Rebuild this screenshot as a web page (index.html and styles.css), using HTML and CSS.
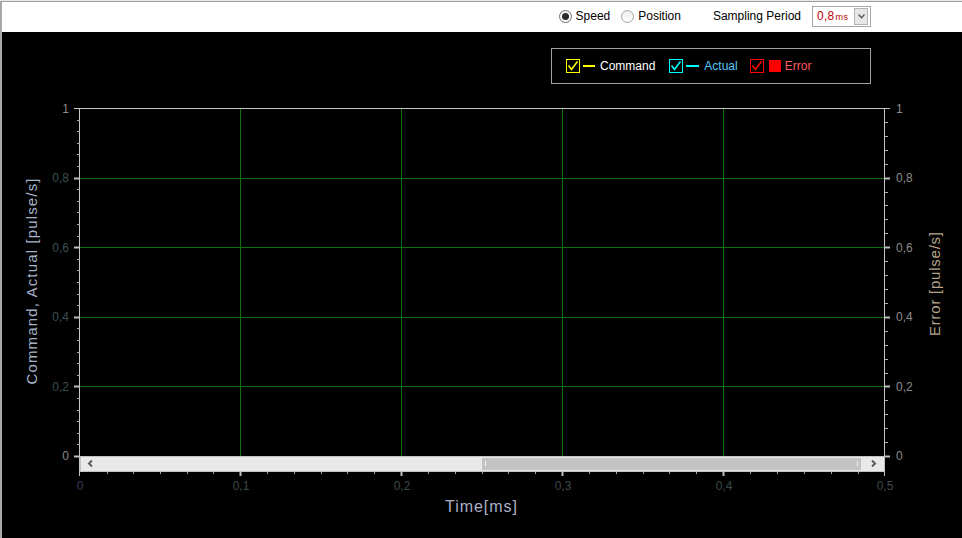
FILE: index.html
```html
<!DOCTYPE html>
<html>
<head>
<meta charset="utf-8">
<title>Chart</title>
<link rel="stylesheet" href="styles.css">
</head>
<body>
<div class="window">
  <div class="toolbar">
    <label class="opt"><span class="radio checked"><span class="dot"></span></span>Speed</label>
    <label class="opt opt-pos"><span class="radio"></span>Position</label>
    <span class="period-label">Sampling Period</span>
    <div class="select">
      <span class="value">0,8<span class="unit">ms</span></span>
      <span class="drop"><svg width="7" height="5" viewBox="0 0 7 5"><polyline class="chev" points="0.5,0.5 3.5,3.8 6.5,0.5"/></svg></span>
    </div>
  </div>
  <div class="chart">
    <div class="legend-row">
      <div class="legend">
        <span class="cb cb-yellow"><svg width="12" height="12" viewBox="0 0 12 12"><polyline points="1.5,5.5 4.5,9.5 10.5,1.5"/></svg></span>
        <span class="swatch-line sw-yellow"></span>
        <span class="lbl lbl-cmd">Command</span>
        <span class="cb cb-cyan cb-gap1"><svg width="12" height="12" viewBox="0 0 12 12"><polyline points="1.5,5.5 4.5,9.5 10.5,1.5"/></svg></span>
        <span class="swatch-line sw-cyan"></span>
        <span class="lbl lbl-act">Actual</span>
        <span class="cb cb-red cb-gap2"><svg width="12" height="12" viewBox="0 0 12 12"><polyline points="1.5,5.5 4.5,9.5 10.5,1.5"/></svg></span>
        <span class="swatch-sq"></span>
        <span class="lbl lbl-err">Error</span>
      </div>
    </div>
    <svg class="plot" width="960" height="454" viewBox="2 84 960 454">
      <g class="grid">
        <line x1="80" y1="178.5" x2="885" y2="178.5"/>
        <line x1="80" y1="247.5" x2="885" y2="247.5"/>
        <line x1="80" y1="317.5" x2="885" y2="317.5"/>
        <line x1="80" y1="386.5" x2="885" y2="386.5"/>
        <line x1="240.5" y1="109" x2="240.5" y2="456"/>
        <line x1="401.5" y1="109" x2="401.5" y2="456"/>
        <line x1="562.5" y1="109" x2="562.5" y2="456"/>
        <line x1="723.5" y1="109" x2="723.5" y2="456"/>
      </g>
      <g class="axis">
        <line x1="74" y1="108.5" x2="890" y2="108.5"/>
        <line x1="79.5" y1="108" x2="79.5" y2="476"/>
        <line x1="884.5" y1="108" x2="884.5" y2="476"/>
      </g>
      <g class="major">
        <line x1="74" y1="178.5" x2="80" y2="178.5"/>
        <line x1="74" y1="247.5" x2="80" y2="247.5"/>
        <line x1="74" y1="317.5" x2="80" y2="317.5"/>
        <line x1="74" y1="386.5" x2="80" y2="386.5"/>
        <line x1="74" y1="456.5" x2="80" y2="456.5"/>
        <line x1="885" y1="178.5" x2="890" y2="178.5"/>
        <line x1="885" y1="247.5" x2="890" y2="247.5"/>
        <line x1="885" y1="317.5" x2="890" y2="317.5"/>
        <line x1="885" y1="386.5" x2="890" y2="386.5"/>
        <line x1="885" y1="456.5" x2="890" y2="456.5"/>
        <line x1="240.5" y1="472" x2="240.5" y2="476"/>
        <line x1="401.5" y1="472" x2="401.5" y2="476"/>
        <line x1="562.5" y1="472" x2="562.5" y2="476"/>
        <line x1="723.5" y1="472" x2="723.5" y2="476"/>
      </g>
      <g class="minor">
        <line x1="77" y1="120.5" x2="80" y2="120.5"/><line x1="77" y1="131.5" x2="80" y2="131.5"/><line x1="77" y1="143.5" x2="80" y2="143.5"/><line x1="77" y1="154.5" x2="80" y2="154.5"/><line x1="77" y1="166.5" x2="80" y2="166.5"/>
        <line x1="77" y1="189.5" x2="80" y2="189.5"/><line x1="77" y1="201.5" x2="80" y2="201.5"/><line x1="77" y1="212.5" x2="80" y2="212.5"/><line x1="77" y1="224.5" x2="80" y2="224.5"/><line x1="77" y1="236.5" x2="80" y2="236.5"/>
        <line x1="77" y1="259.5" x2="80" y2="259.5"/><line x1="77" y1="270.5" x2="80" y2="270.5"/><line x1="77" y1="282.5" x2="80" y2="282.5"/><line x1="77" y1="294.5" x2="80" y2="294.5"/><line x1="77" y1="305.5" x2="80" y2="305.5"/>
        <line x1="77" y1="328.5" x2="80" y2="328.5"/><line x1="77" y1="340.5" x2="80" y2="340.5"/><line x1="77" y1="352.5" x2="80" y2="352.5"/><line x1="77" y1="363.5" x2="80" y2="363.5"/><line x1="77" y1="375.5" x2="80" y2="375.5"/>
        <line x1="77" y1="398.5" x2="80" y2="398.5"/><line x1="77" y1="410.5" x2="80" y2="410.5"/><line x1="77" y1="421.5" x2="80" y2="421.5"/><line x1="77" y1="433.5" x2="80" y2="433.5"/><line x1="77" y1="444.5" x2="80" y2="444.5"/>
        <line x1="885" y1="122.5" x2="888" y2="122.5"/><line x1="885" y1="136.5" x2="888" y2="136.5"/><line x1="885" y1="150.5" x2="888" y2="150.5"/><line x1="885" y1="164.5" x2="888" y2="164.5"/>
        <line x1="885" y1="192.5" x2="888" y2="192.5"/><line x1="885" y1="205.5" x2="888" y2="205.5"/><line x1="885" y1="219.5" x2="888" y2="219.5"/><line x1="885" y1="233.5" x2="888" y2="233.5"/>
        <line x1="885" y1="261.5" x2="888" y2="261.5"/><line x1="885" y1="275.5" x2="888" y2="275.5"/><line x1="885" y1="289.5" x2="888" y2="289.5"/><line x1="885" y1="303.5" x2="888" y2="303.5"/>
        <line x1="885" y1="331.5" x2="888" y2="331.5"/><line x1="885" y1="345.5" x2="888" y2="345.5"/><line x1="885" y1="359.5" x2="888" y2="359.5"/><line x1="885" y1="373.5" x2="888" y2="373.5"/>
        <line x1="885" y1="400.5" x2="888" y2="400.5"/><line x1="885" y1="414.5" x2="888" y2="414.5"/><line x1="885" y1="428.5" x2="888" y2="428.5"/><line x1="885" y1="442.5" x2="888" y2="442.5"/>
        <line x1="107.5" y1="472" x2="107.5" y2="474"/><line x1="133.5" y1="472" x2="133.5" y2="474"/><line x1="160.5" y1="472" x2="160.5" y2="474"/><line x1="187.5" y1="472" x2="187.5" y2="474"/><line x1="213.5" y1="472" x2="213.5" y2="474"/>
        <line x1="267.5" y1="472" x2="267.5" y2="474"/><line x1="294.5" y1="472" x2="294.5" y2="474"/><line x1="321.5" y1="472" x2="321.5" y2="474"/><line x1="347.5" y1="472" x2="347.5" y2="474"/><line x1="374.5" y1="472" x2="374.5" y2="474"/>
        <line x1="428.5" y1="472" x2="428.5" y2="474"/><line x1="455.5" y1="472" x2="455.5" y2="474"/><line x1="482.5" y1="472" x2="482.5" y2="474"/><line x1="508.5" y1="472" x2="508.5" y2="474"/><line x1="535.5" y1="472" x2="535.5" y2="474"/>
        <line x1="589.5" y1="472" x2="589.5" y2="474"/><line x1="616.5" y1="472" x2="616.5" y2="474"/><line x1="643.5" y1="472" x2="643.5" y2="474"/><line x1="669.5" y1="472" x2="669.5" y2="474"/><line x1="696.5" y1="472" x2="696.5" y2="474"/>
        <line x1="750.5" y1="472" x2="750.5" y2="474"/><line x1="777.5" y1="472" x2="777.5" y2="474"/><line x1="804.5" y1="472" x2="804.5" y2="474"/><line x1="831.5" y1="472" x2="831.5" y2="474"/><line x1="858.5" y1="472" x2="858.5" y2="474"/>
      </g>
      <g class="scroll">
        <rect class="track" x="80.5" y="456.5" width="804" height="15"/>
        <rect class="thumb" x="482" y="458" width="379" height="12"/>
        <line class="grip" x1="485.5" y1="461" x2="485.5" y2="466"/>
        <line class="grip" x1="857.5" y1="461" x2="857.5" y2="466"/>
        <polyline class="arrow" points="92,460.5 89,463.5 92,466.5"/>
        <polyline class="arrow" points="872,460.5 875,463.5 872,466.5"/>
      </g>
      <g class="lbl-left">
        <text class="lt-light" x="69" y="112.5">1</text>
        <text x="69" y="182">0,8</text>
        <text x="69" y="251.5">0,6</text>
        <text x="69" y="321">0,4</text>
        <text x="69" y="390.5">0,2</text>
        <text class="lt-light" x="69" y="460">0</text>
      </g>
      <g class="lbl-right">
        <text x="896" y="112.5">1</text>
        <text x="896" y="182">0,8</text>
        <text x="896" y="251.5">0,6</text>
        <text x="896" y="321">0,4</text>
        <text x="896" y="390.5">0,2</text>
        <text x="896" y="460">0</text>
      </g>
      <g class="lbl-bottom">
        <text class="zero" x="80" y="490">0</text>
        <text x="241" y="490">0,1</text>
        <text x="402" y="490">0,2</text>
        <text x="563" y="490">0,3</text>
        <text x="724" y="490">0,4</text>
        <text x="885" y="490">0,5</text>
      </g>
      <text class="title-left" transform="translate(37,281.5) rotate(-90)" textLength="206">Command, Actual [pulse/s]</text>
      <text class="title-right" transform="translate(940,284) rotate(-90)" textLength="104">Error [pulse/s]</text>
      <text class="title-bottom" x="481" y="512" textLength="72">Time[ms]</text>
    </svg>
  </div>
</div>
</body>
</html>
```
FILE: styles.css
```css
* { box-sizing: border-box; }
html, body { margin: 0; padding: 0; }
body {
  background: #e8e8e8;
  font-family: "Liberation Sans", Arial, sans-serif;
  overflow: hidden;
}
.window {
  margin-top: 1px;
  width: 962px;
  height: 537px;
  border-top: 1px solid #a0a0a0;
  border-left: 2px solid #a8a8a8;
  background: #ffffff;
  display: flex;
  flex-direction: column;
}
.toolbar {
  height: 30px;
  flex: none;
  display: flex;
  align-items: center;
  justify-content: flex-end;
  padding-right: 91px;
  padding-bottom: 2px;
  font-size: 12px;
  color: #000;
}
.opt {
  display: flex;
  align-items: center;
}
.opt-pos { margin-left: 11px; }
.radio {
  width: 13px;
  height: 13px;
  border-radius: 50%;
  border: 1px solid #a4a4a4;
  background: linear-gradient(#eeeeee, #ffffff);
  margin-right: 4px;
  display: flex;
  align-items: center;
  justify-content: center;
}
.radio.checked { border-color: #707070; }
.dot {
  width: 7px;
  height: 7px;
  border-radius: 50%;
  background: #2a2a2a;
}
.period-label { margin-left: 32px; }
.select {
  margin-left: 11px;
  width: 59px;
  height: 21px;
  border: 1px solid #a8a8a8;
  display: flex;
  align-items: center;
  justify-content: space-between;
  padding: 0 2px 0 4px;
}
.value {
  color: #c00000;
  font-size: 12px;
  letter-spacing: 0.3px;
}
.unit { font-size: 9px; margin-left: 1px; }
.drop {
  width: 14px;
  height: 17px;
  background: #e6e6e6;
  border: 1px solid #b4b4b4;
  display: flex;
  align-items: center;
  justify-content: center;
}
.chev { fill: none; stroke: #555; stroke-width: 1.4; }

.chart {
  flex: 1;
  background: #000;
  display: flex;
  flex-direction: column;
}
.legend-row {
  display: flex;
  justify-content: flex-end;
  padding: 16px 91px 0 0;
}
.legend {
  width: 320px;
  height: 36px;
  border: 1px solid #a0a0a0;
  display: flex;
  align-items: center;
  padding-left: 14px;
  font-size: 12px;
}
.cb {
  width: 14px;
  height: 14px;
  border: 1px solid;
  display: flex;
  align-items: center;
  justify-content: center;
}
.cb svg polyline { fill: none; stroke-width: 1.6; }
.cb-yellow { border-color: #ffff00; }
.cb-yellow polyline { stroke: #ffff00; }
.cb-cyan { border-color: #00ffff; }
.cb-cyan polyline { stroke: #00ffff; }
.cb-red { border-color: #ff0000; }
.cb-red polyline { stroke: #ff0000; }
.cb-gap1 { margin-left: 14px; }
.cb-gap2 { margin-left: 12px; }
.swatch-line {
  width: 12px;
  height: 2px;
  margin-left: 3px;
}
.sw-yellow { background: #ffff00; }
.sw-cyan { background: #00ffff; width: 13px; }
.swatch-sq {
  width: 12px;
  height: 12px;
  background: #ff0000;
  margin-left: 5px;
}
.lbl { margin-left: 5px; }
.lbl-cmd { color: #ffffff; }
.lbl-act { color: #5cc8f8; }
.lbl-err { color: #ff5a5a; margin-left: 4px; }

.plot { display: block; }
.grid line { stroke: #0a720a; stroke-width: 1; }
.axis line { stroke: #c6c6c6; stroke-width: 1; }
.major line { stroke: #c0c0c0; stroke-width: 2; }
.minor line { stroke: #a8a8a8; stroke-width: 1; }
.track { fill: #e9e9e9; stroke: #c2c2c2; stroke-width: 1; }
.thumb { fill: #c3c3c3; }
.grip { stroke: #f4f4f4; stroke-width: 1; }
.arrow { fill: none; stroke: #5e5e5e; stroke-width: 2; }
.lbl-left text, .lbl-right text, .lbl-bottom text {
  font-family: "Liberation Sans", Arial, sans-serif;
  font-size: 12px;
}
.lbl-left text { fill: #3a5252; text-anchor: end; }
.lbl-left text.lt-light { fill: #8a8a8a; }
.lbl-right text { fill: #8c8c8c; text-anchor: start; }
.lbl-bottom text { fill: #3e4a4a; text-anchor: middle; }
.lbl-bottom text.zero { fill: #3c3c5c; }
.title-left, .title-right, .title-bottom {
  font-family: "Liberation Sans", Arial, sans-serif;
  text-anchor: middle;
}
.title-left { font-size: 15px; fill: #a6b2c8; }
.title-right { font-size: 15px; fill: #b4a288; }
.title-bottom { font-size: 16px; fill: #aab0c8; }
```
